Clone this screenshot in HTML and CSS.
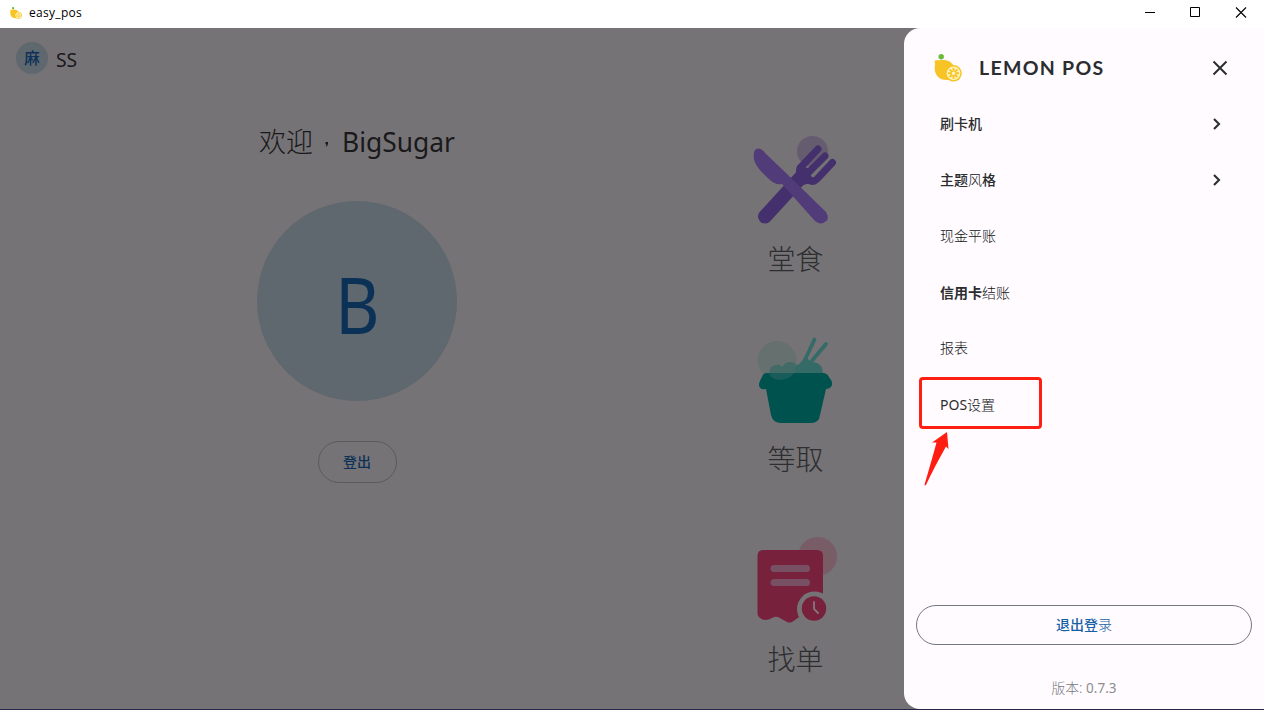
FILE: index.html
```html
<!DOCTYPE html>
<html lang="zh-CN">
<head>
<meta charset="utf-8">
<title>easy_pos</title>
<link rel="stylesheet" href="styles.css">
</head>
<body>
<svg class="defs" width="0" height="0" aria-hidden="true">
  <symbol id="lemon" viewBox="0 0 28 28">
    <circle cx="7.200" cy="2.700" r="2.700" fill="#6cbb35"/>
    <path d="M.5 7.200C1.400 5.400 4.200 6.500 6 6.300C9 5.700 13 5.800 16 7.700C19 9.700 21 12.400 21 17C21 21 18.500 25.700 14 26C6 26.500 .7 21.500 .7 14.500C.7 12 1.600 10 .5 7.200Z" fill="#f7c325"/>
    <circle cx="19.500" cy="19.300" r="8.300" fill="#f7c325"/>
    <circle cx="19.500" cy="19.300" r="6.800" fill="#fff6bf"/>
    <path d="M19.500 13.800v3.800M19.500 21v3.800M14 19.300h3.800M21.200 19.300h3.800M15.600 15.400l2.700 2.700M20.700 20.500l2.700 2.700M15.600 23.200l2.700-2.700M20.700 18.100l2.700-2.700" stroke="#f7c325" stroke-width="1.900"/>
  </symbol>
  <symbol id="chevron" viewBox="0 0 10 14">
    <path d="M2 2l5 5-5 5" fill="none" stroke="#2b2d2f" stroke-width="2.100"/>
  </symbol>
</svg>

<header class="titlebar">
  <svg class="titlebar-icon"><use href="#lemon"/></svg>
  <span class="titlebar-name">easy_pos</span>
  <div class="window-controls">
    <svg viewBox="0 0 12 12"><path d="M1 5.500h10" stroke="#000"/></svg>
    <svg viewBox="0 0 12 12"><path d="M1.500 .5h9v9h-9z" fill="none" stroke="#000"/></svg>
    <svg viewBox="0 0 12 12"><path d="M1 .5l10 10M11 .5L1 10.500" stroke="#000" stroke-width="1.100"/></svg>
  </div>
</header>

<div class="app">
  <main class="home">
    <section class="profile">
      <div class="store"><span class="store-avatar">麻</span><span class="store-name">SS</span></div>
      <h1 class="welcome"><span>欢迎</span><svg class="comma" viewBox="0 0 28 28"><path d="M12.500 14h2.500v2.300l-1.300 2.200h-.8l.6-2.300h-1z" fill="#19191b"/></svg><span class="user">BigSugar</span></h1>
      <div class="avatar"><span>B</span></div>
      <button class="sign-off">登出</button>
    </section>
    <nav class="modes">
      <a class="mode">
        <svg viewBox="0 0 110 110">
          <circle cx="72.500" cy="26.500" r="15.500" fill="#665c70"/>
          <path d="M25 91.500L64 49" stroke="#44306c" stroke-width="14" stroke-linecap="round"/>
          <path d="M78 24L60 43Q58 51 66 54Q73 59 78 53L92.500 37.500M68 48L85 31" fill="none" stroke="#44306c" stroke-width="7" stroke-linecap="round" stroke-linejoin="round"/>
          <path d="M58 41l18 14-12 5-9-9z" fill="#44306c"/>
          <path d="M15 25Q20 21 25 28L46 48L86 87Q89 92 87 95.500Q81 101 75 96L42 59Q35 60 30 55Q15 42 14 34Q13 28 15 25Z" fill="#513b79"/>
        </svg>
        <span>堂食</span>
      </a>
      <a class="mode">
        <svg viewBox="0 0 110 110">
          <path d="M63 39L74.500 14.500M71 37L86 19" stroke="#356b67" stroke-width="3.800" stroke-linecap="round"/>
          <path d="M29 49Q28 41 36 40Q40 39 42 42Q47 34 56 39L58 40L66 32L71 37Q83 37 83 49Z" fill="#356b67"/>
          <circle cx="37" cy="35.500" r="19.500" fill="#64706f" fill-opacity=".85"/>
          <path d="M30 48Q29 41 36 40Q40 39 42 42Q47 35 55 38V48Z" fill="#426a67"/>
          <path d="M27 48H83Q87 48 89 52Q94 58 91 62Q89 64 86 64L80 90Q79 98 71 98H41Q33 98 31 90L26 64Q19 65 19 60Q19 57 22 52Q23 48 27 48Z" fill="#00524f"/>
          <path d="M29 48H54Q49 55 39 55Q31 54 29 48Z" fill="#195c59"/>
        </svg>
        <span>等取</span>
      </a>
      <a class="mode">
        <svg viewBox="0 0 110 110">
          <circle cx="77.500" cy="31.500" r="19.500" fill="#785d67"/>
          <path d="M23 25H77Q83 25 83 31V92H59Q55 95 52 97Q50 98 47 97L38 92Q35 91 32 93Q25 97 20 93Q17 91 17.500 87V31Q17.500 25 23 25Z" fill="#77213c"/>
          <path d="M34 43.500H66.500M34 57.500H66.500" stroke="#785064" stroke-width="7" stroke-linecap="round"/>
          <circle cx="74.500" cy="84" r="17.500" fill="#767376"/>
          <circle cx="74" cy="83.500" r="12.200" fill="#77213c"/>
          <path d="M74 77v7l4 4" fill="none" stroke="#85777e" stroke-width="1.800" stroke-linecap="round"/>
        </svg>
        <span>找单</span>
      </a>
    </nav>
  </main>

  <aside class="drawer">
    <div class="brand">
      <svg class="brand-icon"><use href="#lemon"/></svg>
      <span class="brand-name">LEMON POS</span>
      <svg class="close" viewBox="0 0 16 16"><path d="M1.500 1.500l13 13M14.500 1.500l-13 13" stroke="#2b2d2f" stroke-width="2"/></svg>
    </div>
    <ul class="menu">
      <li><span class="medium">刷卡机</span><svg class="chevron"><use href="#chevron"/></svg></li>
      <li><span><span class="medium">主题</span><span class="thin">风</span><span class="medium">格</span></span><svg class="chevron"><use href="#chevron"/></svg></li>
      <li><span>现金平账</span></li>
      <li class="low"><span><b>信用卡</b>结账</span></li>
      <li><span>报表</span></li>
      <li class="low"><span><span class="latin">POS</span>设置</span></li>
    </ul>
    <div class="highlight"></div>
    <svg class="arrow" viewBox="0 0 26 56"><path d="M23 1L24.500 18L22 15.500C15 28 8 41 2 54L.5 54.500L1 52C5 38 9 25 12.500 11.500L8 11.500Z" fill="#ff1f12"/></svg>
    <button class="logout"><span>退出登</span><span class="thin">录</span></button>
    <div class="version">版本: <span>0.7.3</span></div>
  </aside>
</div>
</body>
</html>
```
FILE: styles.css
```css
* { box-sizing: border-box; }
body {
  margin: 0;
  width: 1264px;
  height: 710px;
  overflow: hidden;
  display: flex;
  flex-direction: column;
  background: #fff;
  font-family: "Noto Sans", "Noto Sans CJK SC", sans-serif;
}
.defs { position: absolute; }
button { font-family: inherit; background: none; padding: 0; }

.titlebar {
  flex: 0 0 28px;
  display: flex;
  align-items: center;
  padding: 0 17px 3px 10px;
}
.titlebar-icon { width: 12px; height: 12px; }
.titlebar-name {
  margin-left: 7px;
  font-family: "Open Sans", sans-serif;
  font-size: 12px;
  letter-spacing: .3px;
  line-height: 16px;
  color: #000;
}
.window-controls { margin-left: auto; display: flex; }
.window-controls svg { width: 12px; height: 12px; margin-left: 33px; }
.window-controls svg:last-child { margin-left: 34px; }

.app {
  position: relative;
  height: 682px;
  background: #767376;
  border-bottom: 1px solid #25284a;
}
.home { height: 100%; display: grid; grid-template-columns: 714px 162px; }
.profile { display: flex; flex-direction: column; align-items: center; }
.store {
  align-self: flex-start;
  display: flex;
  align-items: center;
  gap: 8px;
  padding: 14px 16px 0;
}
.store-avatar {
  width: 32px;
  height: 32px;
  border-radius: 50%;
  background: #5f676f;
  color: #0b3156;
  font-size: 15.500px;
  font-weight: 500;
  line-height: 33px;
  text-align: center;
}
.store-name { font-size: 19.300px; line-height: 28px; color: #19191b; padding-top: 3px; }
.welcome {
  display: flex;
  align-items: center;
  margin: 48px 0 0;
  height: 40px;
  font-size: 27px;
  font-weight: 300;
  line-height: 40px;
  color: #19191b;
}
.welcome .user { margin-left: 1px; font-size: 26.400px; font-weight: 400; }
.comma { width: 28px; height: 28px; }
.avatar {
  width: 200px;
  height: 200px;
  margin-top: 39px;
  border-radius: 50%;
  background: #5f676f;
  color: #0b3156;
  font-size: 78px;
  line-height: 207px;
  text-align: center;
}
.avatar span { display: inline-block; transform: scaleX(.88); }
.sign-off {
  width: 79px;
  height: 42px;
  margin-top: 40px;
  padding-bottom: 2px;
  border: 1px solid #5c5a5d;
  border-radius: 21px;
  font-size: 14px;
  font-weight: 500;
  color: #0b3156;
}
.modes { display: flex; flex-direction: column; padding-top: 97px; }
.mode {
  height: 200px;
  display: flex;
  flex-direction: column;
  align-items: center;
  font-size: 28px;
  font-weight: 300;
  line-height: 40px;
  color: #2c2e30;
}
.mode svg { width: 110px; height: 110px; flex: none; }
.mode span { margin-top: 4px; padding-left: 1px; }

.drawer {
  position: absolute;
  inset: 0 0 0 auto;
  width: 360px;
  padding: 0 12px;
  display: flex;
  flex-direction: column;
  border-radius: 16px 0 0 16px;
  background: #fffbff;
  color: #2b2d2f;
}
.brand { display: flex; align-items: center; height: 68px; padding: 12px 24px 0 18px; }
.brand-icon { width: 28px; height: 28px; }
.brand-name {
  margin-left: 17px;
  font-family: Lato, sans-serif;
  font-size: 19.500px;
  font-weight: 700;
  letter-spacing: 1.300px;
  line-height: 28px;
}
.close { width: 16px; height: 16px; margin-left: auto; }
.menu {
  list-style: none;
  margin: 0;
  padding: 0 30.500px 0 24px;
  font-size: 14px;
  font-weight: 300;
  color: #111315;
}
.menu li { display: flex; align-items: center; justify-content: space-between; height: 56px; }
.menu li > span { padding-bottom: 3px; }
.menu .low > span { padding-bottom: 1px; }
.menu .medium { font-weight: 500; color: #2b2d2f; }
.menu .latin { font-weight: 400; color: #2b2d2f; }
.menu .thin, .logout .thin { font-weight: 300; }
.menu b { font-weight: 700; color: #2b2d2f; }
.chevron { width: 10px; height: 14px; }
.highlight {
  position: absolute;
  left: 15px;
  top: 349px;
  width: 123px;
  height: 52px;
  border: 3px solid #ff1f12;
  border-radius: 4px;
}
.arrow { position: absolute; left: 20px; top: 403px; width: 26px; height: 56px; }
.logout {
  flex: none;
  height: 40px;
  margin-top: auto;
  padding-bottom: 2px;
  border: 1px solid #73777f;
  border-radius: 20px;
  font-size: 14px;
  font-weight: 500;
  color: #1660a5;
}
.version {
  margin: 33px 0 11px;
  text-align: center;
  font-size: 13.800px;
  font-weight: 300;
  line-height: 20px;
  color: #77797e;
}
.version span { font-size: 13.500px; font-weight: 400; color: #8b8d92; }
```
